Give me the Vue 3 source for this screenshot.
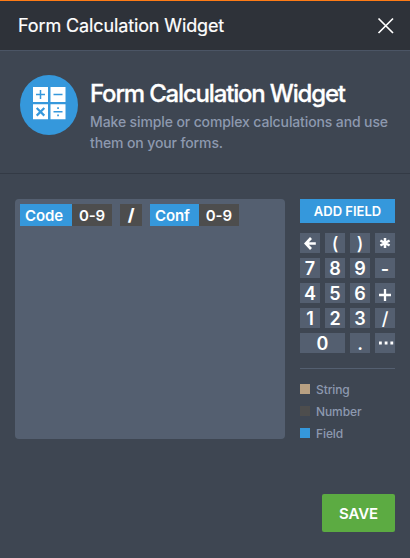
<template>
  <main class="widget">
    <header class="topbar">
      <span class="topbar-title">Form Calculation Widget</span>
      <button class="close" aria-label="Close" @click="clearAll">
        <svg width="18" height="18" viewBox="0 0 18 18">
          <path d="M1.5 1.5L16 16M16 1.5L1.5 16" stroke="#fff" stroke-width="1.7" fill="none" />
        </svg>
      </button>
    </header>

    <section class="intro">
      <div class="logo">
        <svg width="33" height="33" viewBox="0 0 33 33">
          <path d="M0 0h15v15H0zM17.5 0h15v15h-15zM0 17.3h15v15H0zM17.5 17.3h15v15h-15z" fill="#fff" />
          <g stroke="#3598dc" fill="none">
            <path d="M7.5 3v9M3 7.5h9M20.5 7.5h9M20.5 24.8h9" stroke-width="1.5" />
            <path d="M3.7 21l7.6 7.6M11.3 21l-7.6 7.6" stroke-width="2.2" />
          </g>
          <path d="M24.2 20.3h1.7v1.7h-1.7zM24.2 27.5h1.7v1.7h-1.7z" fill="#3598dc" />
        </svg>
      </div>
      <div class="intro-text">
        <h1>Form Calculation Widget</h1>
        <p>Make simple or complex calculations and use<br>them on your forms.</p>
      </div>
    </section>

    <section class="content">
      <div class="editor">
        <div v-for="token in tokens" :key="token.id" class="token">
          <span v-if="token.field" class="token-field">{{ token.field }}</span>
          <span class="token-value" :class="{ operator: !token.field }">{{ token.value }}</span>
        </div>
      </div>

      <aside class="side">
        <button class="add-field" @click="addField">ADD FIELD</button>
        <div class="keypad">
          <button v-for="key in keys" :key="key" class="key" :class="{ wide: key === '0' }" @click="press(key)">
            <svg v-if="key === 'back'" width="12" height="13" viewBox="0 0 12 13">
              <path d="M7 1L1.8 6.5l5.2 5.5M2 6.5h9.8" stroke="#fff" stroke-width="2.7" fill="none" />
            </svg>
            <svg v-else-if="key === '*'" width="12" height="12" viewBox="0 0 12 12">
              <path d="M6 1v10M1.4 3.5l9.2 5M10.6 3.5l-9.2 5" stroke="#fff" stroke-width="2.5" />
            </svg>
            <svg v-else-if="key === '+'" class="plus" width="14" height="14" viewBox="0 0 14 14">
              <path d="M7 1v12M1 7h12" stroke="#fff" stroke-width="2.3" />
            </svg>
            <svg v-else-if="key === 'more'" class="more" width="16" height="4" viewBox="0 0 16 4">
              <path d="M1 .6h2.8v2.8H1zM6.7 .6h2.8v2.8H6.7zM12.4 .6h2.8v2.8h-2.8z" fill="#fff" />
            </svg>
            <span v-else :class="{ thin: '()/'.includes(key) }">{{ key }}</span>
          </button>
        </div>
        <ul class="legend">
          <li v-for="item in legend" :key="item.name">
            <i :class="item.type"></i><span>{{ item.name }}</span>
          </li>
        </ul>
      </aside>
    </section>

    <footer>
      <button class="save">SAVE</button>
    </footer>
  </main>
</template>

<script setup>
import { ref } from 'vue'

let id = 0

const tokens = ref([
  { id: id++, field: 'Code', value: '0-9' },
  { id: id++, value: '/' },
  { id: id++, field: 'Conf', value: '0-9' }
])

const keys = ['back', '(', ')', '*', '7', '8', '9', '-', '4', '5', '6', '+', '1', '2', '3', '/', '0', '.', 'more']

const legend = [
  { name: 'String', type: 'string' },
  { name: 'Number', type: 'number' },
  { name: 'Field', type: 'field' }
]

function press(key) {
  if (key === 'more') return
  if (key === 'back') {
    tokens.value.pop()
    return
  }
  tokens.value.push({ id: id++, value: key })
}

function addField() {
  tokens.value.push({ id: id++, field: 'Field', value: '0-9' })
}

function clearAll() {
  tokens.value = []
}
</script>

<style>
body {
  margin: 0;
  background: #3e4652;
}
</style>

<style scoped>
* {
  margin: 0;
  padding: 0;
  box-sizing: border-box;
}

.widget {
  width: 410px;
  height: 558px;
  overflow: hidden;
  background: #3e4652;
  color: #fff;
  font-family: Inter, 'Liberation Sans', sans-serif;
}

button {
  border: none;
  color: #fff;
  font-family: inherit;
  cursor: pointer;
}

.topbar {
  display: flex;
  justify-content: space-between;
  align-items: center;
  height: 51px;
  padding: 0 15px 0 18px;
  background: #2e3239;
  border-top: 1px solid #ff7b15;
  border-bottom: 1px solid #4b5565;
}

.topbar-title {
  font-size: 18px;
  letter-spacing: -0.12px;
  -webkit-text-stroke: 0.2px #fff;
}

.close {
  display: flex;
  background: none;
}

.intro {
  display: flex;
  height: 123px;
  padding: 24px 0 0 20px;
  border-bottom: 1px solid #333a45;
}

.logo {
  display: flex;
  flex: none;
  align-items: center;
  justify-content: center;
  width: 58px;
  height: 60px;
  padding-bottom: 3px;
  border-radius: 50%;
  background: #3598dc;
}

.intro-text {
  padding-left: 12px;
  white-space: nowrap;
}

h1 {
  margin-top: 4px;
  font-size: 24px;
  font-weight: 500;
  line-height: 30px;
  letter-spacing: -1.18px;
  -webkit-text-stroke: 0.3px #fff;
}

p {
  margin-top: 2px;
  font-size: 14px;
  font-weight: 500;
  line-height: 21px;
  letter-spacing: -0.12px;
  color: #8d99af;
}

.content {
  display: flex;
  justify-content: space-between;
  padding: 25px 15px 0;
}

.editor {
  display: flex;
  align-items: flex-start;
  gap: 8px;
  width: 270px;
  height: 240px;
  padding: 5px;
  border-radius: 4px;
  background: #545f70;
}

.token {
  display: flex;
  height: 22px;
  font-size: 15px;
  font-weight: 600;
  line-height: 23px;
  letter-spacing: -0.1px;
}

.token-field {
  padding: 0 9px 0 5px;
  background: #3598dc;
}

.token-value {
  width: 40px;
  background: #4d4d4d;
  text-align: center;
}

.token-value.operator {
  width: 22px;
  font-size: 17px;
  font-weight: 800;
}

.side {
  width: 95px;
}

.add-field {
  display: block;
  width: 95px;
  height: 24px;
  background: #3598dc;
  font-size: 13px;
  font-weight: 600;
  white-space: nowrap;
}

.keypad {
  display: grid;
  grid-template-columns: repeat(4, 20px);
  grid-auto-rows: 20px;
  gap: 5px;
  margin-top: 10px;
}

.key {
  display: flex;
  align-items: center;
  justify-content: center;
  background: #545f70;
  font-size: 18px;
  font-weight: 600;
  line-height: 20px;
}

.key span {
  padding-top: 2px;
}

.key.wide {
  grid-column: span 2;
}

.key .thin {
  padding-top: 1px;
  font-weight: 500;
}

.plus {
  margin-top: 4px;
}

.more {
  margin-left: 2px;
}

.legend {
  margin-top: 15px;
  padding-top: 9px;
  border-top: 1px solid #545f70;
  list-style: none;
}

.legend li {
  display: flex;
  align-items: center;
  height: 22px;
  color: #8d99af;
  font-size: 12px;
  font-weight: 500;
  letter-spacing: -0.1px;
}

.legend i {
  width: 10px;
  height: 10px;
  margin-right: 6px;
}

.string {
  background: #b8a082;
}

.number {
  background: #4d4d4d;
}

.field {
  background: #3598dc;
}

footer {
  display: flex;
  justify-content: flex-end;
  padding: 50px 15px 0;
}

.save {
  width: 73px;
  height: 38px;
  border-radius: 2px;
  background: #5cab42;
  font-size: 15px;
  font-weight: 600;
  letter-spacing: -0.1px;
}
</style>
